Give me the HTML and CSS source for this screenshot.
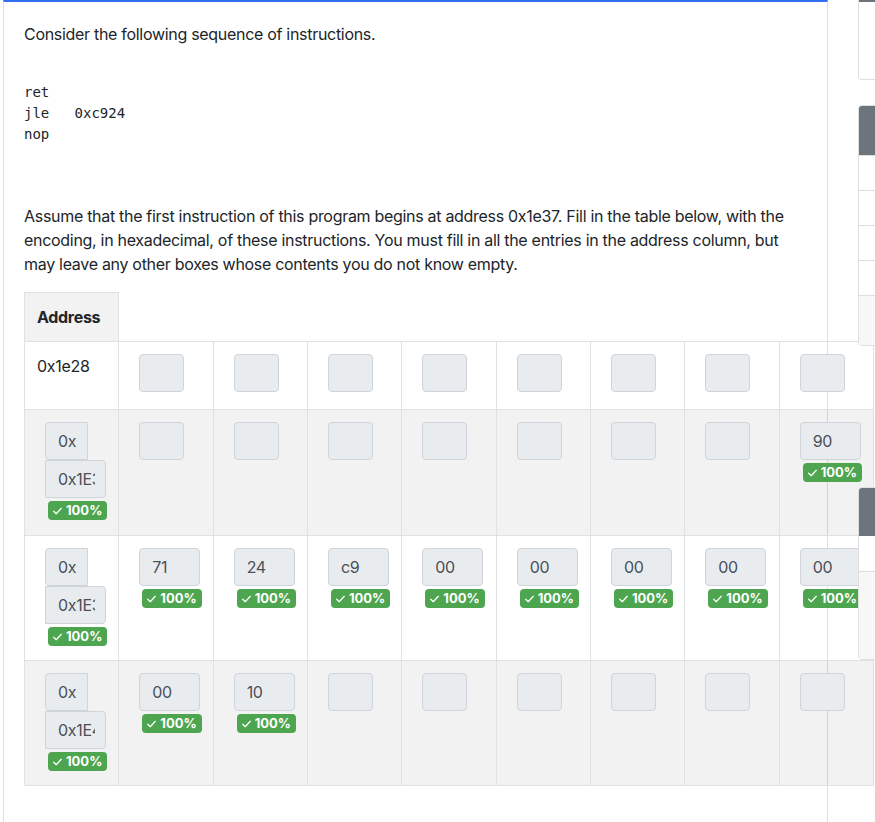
FILE: index.html
```html
<!DOCTYPE html>
<html lang="en">
<head>
<meta charset="utf-8">
<title>Question</title>
<link rel="stylesheet" href="styles.css">
</head>
<body>
<div class="page">
  <main class="main-card">
    <div class="card-body">
      <p class="lead-p">Consider the following sequence of instructions.</p>
      <pre class="code">ret
jle   0xc924
nop</pre>
      <p class="para">Assume that the first instruction of this program begins at address 0x1e37. Fill in the table below, with the encoding, in hexadecimal, of these instructions. You must fill in all the entries in the address column, but may leave any other boxes whose contents you do not know empty.</p>
      <table class="enc">
        <colgroup>
          <col><col><col><col><col><col><col><col><col>
        </colgroup>
        <thead>
          <tr><th>Address</th></tr>
        </thead>
        <tbody>
          <tr class="r1">
            <td class="addr-text">0x1e28</td>
            <td><div class="cell"><input class="fc empty" readonly></div></td>
            <td><div class="cell"><input class="fc empty" readonly></div></td>
            <td><div class="cell"><input class="fc empty" readonly></div></td>
            <td><div class="cell"><input class="fc empty" readonly></div></td>
            <td><div class="cell"><input class="fc empty" readonly></div></td>
            <td><div class="cell"><input class="fc empty" readonly></div></td>
            <td><div class="cell"><input class="fc empty" readonly></div></td>
            <td><div class="cell"><input class="fc empty" readonly></div></td>
          </tr>
          <tr class="r2 striped">
            <td><div class="cell">
              <div class="ig"><span class="pre">0x</span><input class="fc wide grp" value="0x1E30" readonly></div>
              <span class="badge"><svg class="chk" viewBox="0 0 10 8" width="10" height="8"><path d="M0.8 4.2 L3.6 7 L9.2 1" fill="none" stroke="#fff" stroke-width="1.4" stroke-linecap="round" stroke-linejoin="round"/></svg>100%</span>
            </div></td>
            <td><div class="cell"><input class="fc empty" readonly></div></td>
            <td><div class="cell"><input class="fc empty" readonly></div></td>
            <td><div class="cell"><input class="fc empty" readonly></div></td>
            <td><div class="cell"><input class="fc empty" readonly></div></td>
            <td><div class="cell"><input class="fc empty" readonly></div></td>
            <td><div class="cell"><input class="fc empty" readonly></div></td>
            <td><div class="cell"><input class="fc empty" readonly></div></td>
            <td><div class="cell"><input class="fc wide" value="90" readonly><span class="badge"><svg class="chk" viewBox="0 0 10 8" width="10" height="8"><path d="M0.8 4.2 L3.6 7 L9.2 1" fill="none" stroke="#fff" stroke-width="1.4" stroke-linecap="round" stroke-linejoin="round"/></svg>100%</span></div></td>
          </tr>
          <tr class="r3">
            <td><div class="cell">
              <div class="ig"><span class="pre">0x</span><input class="fc wide grp" value="0x1E38" readonly></div>
              <span class="badge"><svg class="chk" viewBox="0 0 10 8" width="10" height="8"><path d="M0.8 4.2 L3.6 7 L9.2 1" fill="none" stroke="#fff" stroke-width="1.4" stroke-linecap="round" stroke-linejoin="round"/></svg>100%</span>
            </div></td>
            <td><div class="cell"><input class="fc wide" value="71" readonly><span class="badge"><svg class="chk" viewBox="0 0 10 8" width="10" height="8"><path d="M0.8 4.2 L3.6 7 L9.2 1" fill="none" stroke="#fff" stroke-width="1.4" stroke-linecap="round" stroke-linejoin="round"/></svg>100%</span></div></td>
            <td><div class="cell"><input class="fc wide" value="24" readonly><span class="badge"><svg class="chk" viewBox="0 0 10 8" width="10" height="8"><path d="M0.8 4.2 L3.6 7 L9.2 1" fill="none" stroke="#fff" stroke-width="1.4" stroke-linecap="round" stroke-linejoin="round"/></svg>100%</span></div></td>
            <td><div class="cell"><input class="fc wide" value="c9" readonly><span class="badge"><svg class="chk" viewBox="0 0 10 8" width="10" height="8"><path d="M0.8 4.2 L3.6 7 L9.2 1" fill="none" stroke="#fff" stroke-width="1.4" stroke-linecap="round" stroke-linejoin="round"/></svg>100%</span></div></td>
            <td><div class="cell"><input class="fc wide" value="00" readonly><span class="badge"><svg class="chk" viewBox="0 0 10 8" width="10" height="8"><path d="M0.8 4.2 L3.6 7 L9.2 1" fill="none" stroke="#fff" stroke-width="1.4" stroke-linecap="round" stroke-linejoin="round"/></svg>100%</span></div></td>
            <td><div class="cell"><input class="fc wide" value="00" readonly><span class="badge"><svg class="chk" viewBox="0 0 10 8" width="10" height="8"><path d="M0.8 4.2 L3.6 7 L9.2 1" fill="none" stroke="#fff" stroke-width="1.4" stroke-linecap="round" stroke-linejoin="round"/></svg>100%</span></div></td>
            <td><div class="cell"><input class="fc wide" value="00" readonly><span class="badge"><svg class="chk" viewBox="0 0 10 8" width="10" height="8"><path d="M0.8 4.2 L3.6 7 L9.2 1" fill="none" stroke="#fff" stroke-width="1.4" stroke-linecap="round" stroke-linejoin="round"/></svg>100%</span></div></td>
            <td><div class="cell"><input class="fc wide" value="00" readonly><span class="badge"><svg class="chk" viewBox="0 0 10 8" width="10" height="8"><path d="M0.8 4.2 L3.6 7 L9.2 1" fill="none" stroke="#fff" stroke-width="1.4" stroke-linecap="round" stroke-linejoin="round"/></svg>100%</span></div></td>
            <td><div class="cell"><input class="fc wide" value="00" readonly><span class="badge"><svg class="chk" viewBox="0 0 10 8" width="10" height="8"><path d="M0.8 4.2 L3.6 7 L9.2 1" fill="none" stroke="#fff" stroke-width="1.4" stroke-linecap="round" stroke-linejoin="round"/></svg>100%</span></div></td>
          </tr>
          <tr class="r4 striped">
            <td><div class="cell">
              <div class="ig"><span class="pre">0x</span><input class="fc wide grp" value="0x1E40" readonly></div>
              <span class="badge"><svg class="chk" viewBox="0 0 10 8" width="10" height="8"><path d="M0.8 4.2 L3.6 7 L9.2 1" fill="none" stroke="#fff" stroke-width="1.4" stroke-linecap="round" stroke-linejoin="round"/></svg>100%</span>
            </div></td>
            <td><div class="cell"><input class="fc wide" value="00" readonly><span class="badge"><svg class="chk" viewBox="0 0 10 8" width="10" height="8"><path d="M0.8 4.2 L3.6 7 L9.2 1" fill="none" stroke="#fff" stroke-width="1.4" stroke-linecap="round" stroke-linejoin="round"/></svg>100%</span></div></td>
            <td><div class="cell"><input class="fc wide" value="10" readonly><span class="badge"><svg class="chk" viewBox="0 0 10 8" width="10" height="8"><path d="M0.8 4.2 L3.6 7 L9.2 1" fill="none" stroke="#fff" stroke-width="1.4" stroke-linecap="round" stroke-linejoin="round"/></svg>100%</span></div></td>
            <td><div class="cell"><input class="fc empty" readonly></div></td>
            <td><div class="cell"><input class="fc empty" readonly></div></td>
            <td><div class="cell"><input class="fc empty" readonly></div></td>
            <td><div class="cell"><input class="fc empty" readonly></div></td>
            <td><div class="cell"><input class="fc empty" readonly></div></td>
            <td><div class="cell"><input class="fc empty" readonly></div></td>
          </tr>
        </tbody>
      </table>
    </div>
  </main>
  <aside class="sidebar">
    <div class="scard s1">
      <div class="shead thin"></div>
      <div class="sbody s1-body"></div>
    </div>
    <div class="scard s2">
      <div class="shead"></div>
      <ul class="slist">
        <li></li><li></li><li></li><li></li>
      </ul>
      <div class="sfoot s2-foot"></div>
    </div>
    <div class="scard s3">
      <div class="shead"></div>
      <div class="sbody s3-body"></div>
      <div class="sfoot s3-foot"></div>
    </div>
  </aside>
</div>
</body>
</html>
```

FILE: styles.css
```css
html, body {
  margin: 0;
  padding: 0;
  background: #fff;
  overflow: hidden;
}

body {
  font-family: Inter, "Liberation Sans", sans-serif;
  font-size: 16px;
  line-height: 24px;
  letter-spacing: -0.3px;
  color: #212529;
}

.page {
  display: flex;
  align-items: flex-start;
  gap: 30px;
  padding-left: 3px;
  width: 1300px;
}

.main-card {
  position: relative;
  flex: 0 0 825px;
  width: 825px;
  min-width: 0;
  box-sizing: border-box;
  min-height: 900px;
  border: 1px solid #dfdfdf;
  border-top: 2px solid #2d6ff0;
}

.card-body {
  padding: 20px;
}

.lead-p {
  margin: 0;
}

.code {
  margin: 36px 0 59px;
  font-family: "DejaVu Sans Mono", "Liberation Mono", monospace;
  font-size: 14px;
  line-height: 21px;
  letter-spacing: 0;
  color: #212529;
}

.para {
  margin: 0 0 16px;
}

/* table */
.enc {
  border-collapse: collapse;
  table-layout: fixed;
  width: 849px;
}

.enc col {
  width: 94.33px;
}

.enc th,
.enc td {
  border: 1px solid #dee2e6;
  padding: 12px;
  vertical-align: top;
  text-align: left;
}

.enc th {
  background: #f2f2f2;
  font-weight: 700;
}

.enc tr.striped td {
  background: rgba(0, 0, 0, 0.05);
}

.r1 td { height: 43px; }
.r2 td { height: 101px; }
.r3 td { height: 100px; }
.r4 td { height: 100px; }

.cell {
  margin-left: 8px;
  display: flex;
  flex-direction: column;
  align-items: flex-start;
}

.fc {
  box-sizing: border-box;
  height: 38px;
  margin: 0;
  padding: 6px 12px;
  font-family: Inter, "Liberation Sans", sans-serif;
  font-size: 16px;
  line-height: 24px;
  letter-spacing: -0.3px;
  color: #495057;
  background: #e9ecef;
  border: 1px solid #ced4da;
  border-radius: 4px;
  outline: none;
}

.fc.empty { width: 45px; }
.fc.wide { width: 61px; }

.ig {
  display: flex;
  flex-wrap: wrap;
  width: 61px;
}

.pre {
  box-sizing: border-box;
  width: 43px;
  height: 38px;
  padding: 6px 12px;
  color: #495057;
  background: #e9ecef;
  border: 1px solid #ced4da;
  border-radius: 4px 0 0 4px;
}

.fc.grp {
  border-radius: 0 4px 4px 0;
  padding-right: 10px;
}

.badge {
  display: inline-flex;
  align-items: center;
  gap: 4px;
  height: 19px;
  margin: 3px 0 0 3px;
  padding: 0 5px;
  box-sizing: border-box;
  background: #4da64f;
  color: #fff;
  font-size: 13px;
  font-weight: 700;
  letter-spacing: 0;
  line-height: 1;
  border-radius: 4px;
}

.chk {
  display: block;
  width: 9px;
  height: 8px;
}

/* sidebar */
.sidebar {
  position: relative;
  flex: 0 0 300px;
  display: flex;
  flex-direction: column;
}

.scard {
  box-sizing: border-box;
  background: #fff;
  border: 1px solid #dfdfdf;
  border-radius: 4px;
  overflow: hidden;
}

.shead {
  height: 49px;
  background: #6c757d;
}

.s1 {
  border-top: 0;
  border-radius: 0 0 4px 4px;
  height: 80px;
  margin-bottom: 25px;
}

.shead.thin {
  height: 2px;
}

.s2 {
  margin-bottom: 141px;
}

.slist {
  list-style: none;
  margin: 0;
  padding: 0;
}

.slist li {
  height: 34px;
  border-top: 1px solid #dfdfdf;
}

.sfoot {
  background: #f7f7f7;
  border-top: 1px solid #dfdfdf;
}

.s2-foot { height: 49px; }

.s3 .shead { height: 48px; }
.s3-body { height: 35px; }
.s3-foot { height: 87px; }
```
